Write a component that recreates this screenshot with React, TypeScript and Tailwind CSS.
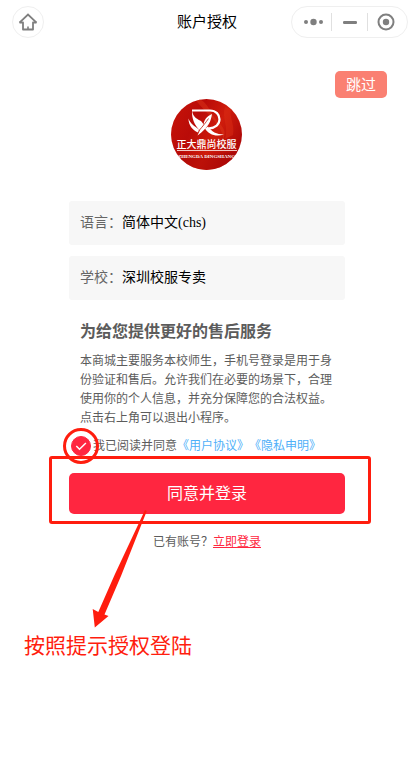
import { useState } from 'react';

function HomeIcon() {
  return (
    <svg className="w-5 h-5" viewBox="0 0 20 20" fill="none" stroke="#7f7f7f" strokeWidth="1.8">
      <path d="M1.5 10.6 10 2.6l8.5 8" />
      <path d="M1.5 10.5H5v7h10v-7h3.5" strokeLinejoin="round" />
      <path d="M10 17.5v-3" strokeWidth="1.6" />
    </svg>
  );
}

function Logo() {
  return (
    <svg className="w-[71px] h-[71px]" viewBox="0 0 71 71" role="img" aria-label="Logo">
      <defs>
        <linearGradient id="logo-bg" x1="0" y1="0" x2="1" y2="0.5">
          <stop offset="0" stopColor="#c81409" />
          <stop offset="0.4" stopColor="#b90b08" />
          <stop offset="0.7" stopColor="#cf1c0c" />
          <stop offset="1" stopColor="#b00a08" />
        </linearGradient>
        <clipPath id="logo-clip">
          <circle cx="35.5" cy="35.5" r="35.5" />
        </clipPath>
      </defs>
      <g clipPath="url(#logo-clip)">
        <rect width="71" height="71" fill="url(#logo-bg)" />
        <path d="M28 0c10 4 10 14 22 26 5 6 4 10 2 14C52 26 34 14 24 0z" fill="#dc3519" opacity="0.5" />
        <path d="M54 8c-4 10 4 20 0 32l8-4c2-10-4-18-2-26z" fill="#da2c14" opacity="0.5" />
        <path d="M0 62c20-8 44-4 71-10v19H0z" fill="#a80505" opacity="0.5" />
        {/* Letter mark with leaves */}
        <path d="M21 11.5h18c6 0 9.500 4 9.500 8.800 0 5-4 8.700-10.500 9" fill="none" stroke="#fff" strokeWidth="2.2" />
        <path d="M37 27.500c3.500 5 8.500 8 16 8-8.500 2.800-16-.5-19-6z" fill="#fff" />
        <path d="M21 11c.5 6 4 8.500 8 10.500 1.800 1 3 2.500 3.500 4.500.5-5 3-8.500 8.500-11-1 7-3 13-14.500 21.500 1-2.500 1.500-3.500 2.500-5C23.500 26.500 20.500 19 21 11z" fill="#fff" />
        <path d="M17.500 19.500c2 5.500 6 7.500 10.500 11l-1 3c-5.500-2.500-9.500-7-9.500-14z" fill="#fff" />
        <path d="M28.500 31c3-3.500 6-7 9-11.500" fill="none" stroke="#bd1009" strokeWidth="0.8" />
        <rect x="6" y="51" width="60" height="1" fill="#f3c9c4" />
        <text
          x="35.5"
          y="48.500"
          fontSize="10"
          textAnchor="middle"
          fill="#fff"
          fontWeight="500"
          className="font-['Noto_Sans_CJK_SC',sans-serif]"
        >
          正大鼎尚校服
        </text>
        <text
          x="35.5"
          y="58.5"
          fontSize="5"
          textAnchor="middle"
          fill="#fff"
          fontWeight="700"
          className="font-['Liberation_Serif',serif]"
        >
          ZHENGDA DINGSHANG
        </text>
      </g>
    </svg>
  );
}

const fields = [
  { label: '语言：', value: '简体中文(chs)' },
  { label: '学校：', value: '深圳校服专卖' },
];

export default function App() {
  const [agreed, setAgreed] = useState(true);

  return (
    <div className="min-h-screen bg-white text-[#5c5c5c] font-['Liberation_Serif','Noto_Sans_CJK_SC',serif]">
      {/* Navigation bar */}
      <header className="h-11 px-1.5 flex items-center justify-between">
        <div className="flex-1">
          <button aria-label="首页" className="ml-1.5 w-8 h-8 rounded-full border border-[#efefef] flex items-center justify-center">
            <HomeIcon />
          </button>
        </div>
        <h1 className="text-[15px] text-black">账户授权</h1>
        <div className="flex-1 flex justify-end">
          <div className="w-[117px] h-8 px-1 rounded-full border border-[#efefef] flex items-center divide-x divide-[#e0e0e0]">
            <button aria-label="更多" className="flex-1 h-[18px] flex items-center justify-center">
              <svg className="w-5 h-4" viewBox="0 0 20 16" fill="#7f7f7f">
                <circle cx="2" cy="8" r="2" />
                <circle cx="9.5" cy="8" r="3.2" />
                <circle cx="17" cy="8" r="2" />
              </svg>
            </button>
            <button aria-label="最小化" className="flex-1 h-[18px] flex items-center justify-center">
              <svg className="w-4 h-4" viewBox="0 0 16 16">
                <rect x="1" y="7" width="14" height="3" rx="1.2" fill="#7f7f7f" />
              </svg>
            </button>
            <button aria-label="关闭" className="flex-1 h-[18px] flex items-center justify-center">
              <svg className="w-[18px] h-[18px]" viewBox="0 0 18 18">
                <circle cx="9" cy="9" r="7.5" fill="none" stroke="#7f7f7f" strokeWidth="2" />
                <circle cx="9" cy="9" r="3.2" fill="#7f7f7f" />
              </svg>
            </button>
          </div>
        </div>
      </header>

      {/* Skip */}
      <div className="flex justify-end pt-[27px] pr-[27px]">
        <button className="w-[52px] h-[27px] rounded-[5px] bg-[#fa8072] text-white text-[15px] leading-[26px]">跳过</button>
      </div>

      <main className="w-2/3 mx-auto">
        <div className="flex justify-center pt-px">
          <Logo />
        </div>

        {/* Read-only fields */}
        <dl className="mt-[31px] space-y-[11px]">
          {fields.map((field) => (
            <div key={field.label} className="h-11 px-[11px] flex items-center rounded-[3px] bg-[#f7f7f7] text-sm">
              <dt className="text-[#666]">{field.label}</dt>
              <dd className="text-black">{field.value}</dd>
            </div>
          ))}
        </dl>

        {/* Notice */}
        <section className="mt-5 px-[11px]">
          <h2 className="text-base leading-6 font-bold">为给您提供更好的售后服务</h2>
          <p className="mt-2 text-xs leading-[19px]">
            本商城主要服务本校师生，手机号登录是用于身份验证和售后。允许我们在必要的场景下，合理使用你的个人信息，并充分保障您的合法权益。点击右上角可以退出小程序。
          </p>
        </section>

        {/* Agreement */}
        <div className="mt-2 pl-0.5 flex items-center text-xs leading-5 whitespace-nowrap">
          <div className="relative w-5 h-5 mr-0.5">
            <input
              id="agree"
              type="checkbox"
              checked={agreed}
              onChange={(e) => setAgreed(e.target.checked)}
              className="block w-5 h-5 appearance-none rounded-full border border-[#ff2640] checked:bg-[#ff2640]"
            />
            {agreed && (
              <svg className="absolute inset-0 w-5 h-5 pointer-events-none" viewBox="0 0 20 20" fill="none" stroke="#fff" strokeWidth="1.5">
                <path d="m5.3 10 3.2 3.2 6.4-6.2" />
              </svg>
            )}
            <span className="absolute -inset-2 rounded-full border-3 border-[#ff1d0e] pointer-events-none" />
          </div>
          <label htmlFor="agree">我已阅读并同意</label>
          <a href="#terms" className="text-[#4fb0f9]">《用户协议》</a>
          <a href="#privacy" className="text-[#4fb0f9]">《隐私申明》</a>
        </div>

        {/* Submit, with the highlight frame and arrow over it */}
        <div className="relative mt-[17px]">
          <button className="w-full h-[41px] rounded-[5px] bg-[#ff2640] text-white text-base">同意并登录</button>
          <span className="absolute -top-[17px] -bottom-[10px] -left-5 -right-[26px] rounded-[3px] border-3 border-[#ff1d0e] pointer-events-none" />
          <svg className="absolute left-5 top-9 w-[60px] h-[120px] pointer-events-none" viewBox="0 0 60 120" fill="#ff1d0e">
            <path d="M56 1 57.8 2 32 67 15.500 105.500 19.500 107 5.800 118.500 3.700 100 9.300 103 26 65z" />
          </svg>
        </div>

        <p className="mt-[18px] text-center text-xs leading-5">
          已有账号？<a href="#login" className="text-[#ff2640] underline">立即登录</a>
        </p>
      </main>

      <p className="mt-[78px] pl-6 text-[21px] leading-8 text-[#ff1d0e]">按照提示授权登陆</p>
    </div>
  );
}
